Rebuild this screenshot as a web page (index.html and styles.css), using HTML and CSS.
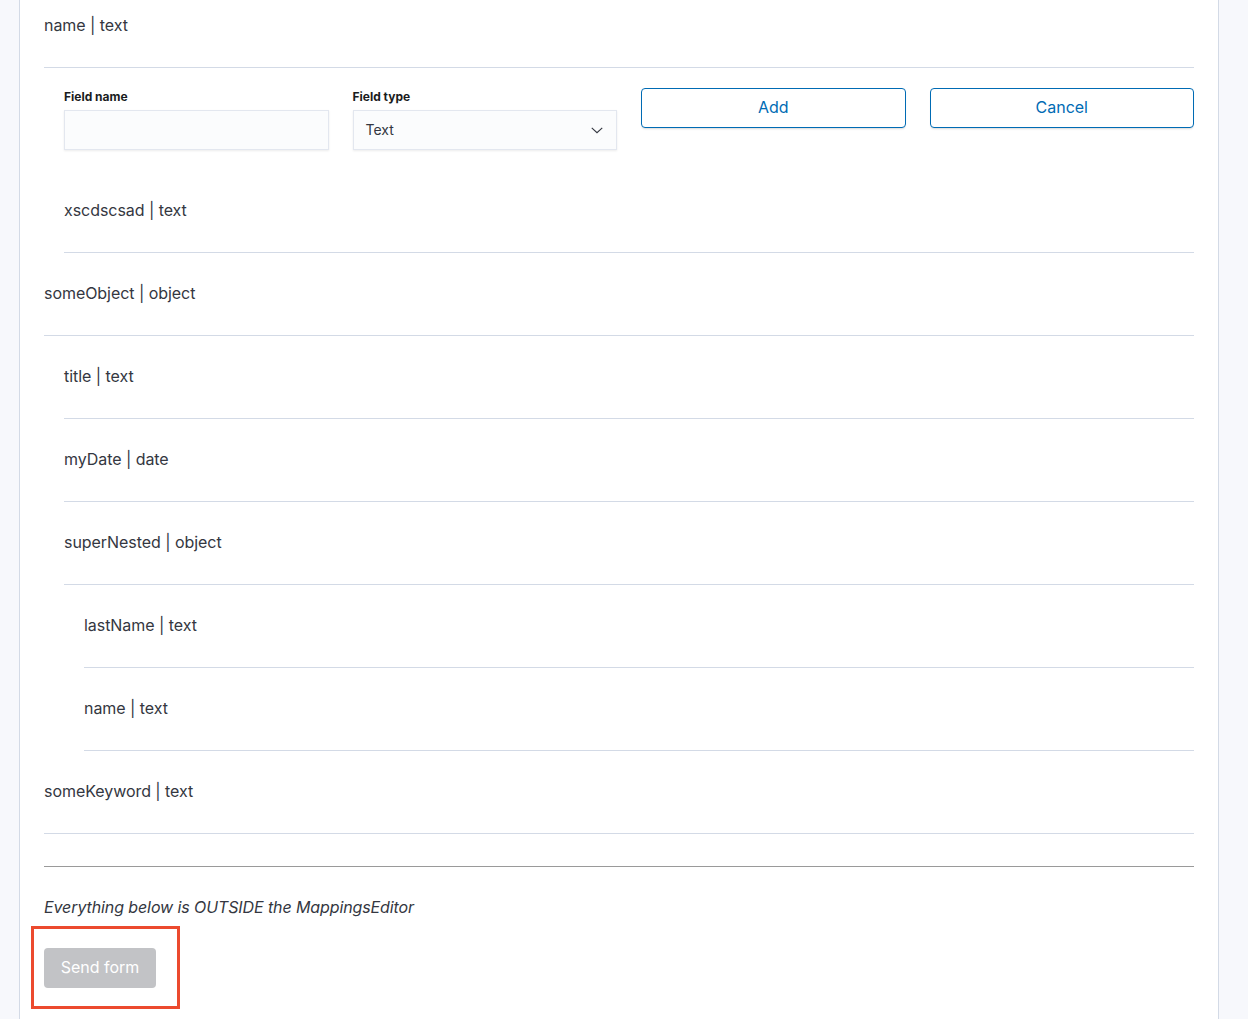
FILE: index.html
```html
<!DOCTYPE html>
<html>
<head>
<meta charset="utf-8">
<link rel="stylesheet" href="styles.css">
</head>
<body>
<div class="panel">
  <div class="row row--first"><span class="label">name | text</span></div>
  <div class="form-row">
    <div class="field">
      <div class="field-label">Field name</div>
      <div class="input"></div>
    </div>
    <div class="field">
      <div class="field-label">Field type</div>
      <div class="input select"><span>Text</span>
        <svg class="chev" width="14" height="14" viewBox="0 0 16 16"><path d="M2 5.5 L8 11 L14 5.5" fill="none" stroke="#343741" stroke-width="1.3"/></svg>
      </div>
    </div>
    <div class="field"><button class="btn">Add</button></div>
    <div class="field"><button class="btn">Cancel</button></div>
  </div>
  <div class="row indent1"><span class="label">xscdscsad | text</span></div>
  <div class="row"><span class="label">someObject | object</span></div>
  <div class="row indent1"><span class="label">title | text</span></div>
  <div class="row indent1"><span class="label">myDate | date</span></div>
  <div class="row indent1"><span class="label">superNested | object</span></div>
  <div class="row indent2"><span class="label">lastName | text</span></div>
  <div class="row indent2"><span class="label">name | text</span></div>
  <div class="row"><span class="label">someKeyword | text</span></div>
  <hr class="sep">
  <p class="note">Everything below is OUTSIDE the MappingsEditor</p>
  <div class="highlight"><button class="send">Send form</button></div>
</div>
</body>
</html>
```
FILE: styles.css
```css
html, body {
  margin: 0;
  padding: 0;
  background: #f7f8fc;
  font-family: Inter, "Noto Sans", sans-serif;
  color: #343741;
}
.panel {
  box-sizing: border-box;
  width: 1200px;
  min-height: 1019px;
  margin-left: 19px;
  background: #fff;
  border-left: 1px solid #d3dae6;
  border-right: 1px solid #d3dae6;
  padding: 0 24px;
}
.row {
  padding: 28px 0 30px;
  border-bottom: 1px solid #d3dae6;
  font-size: 16px;
  line-height: 24px;
  letter-spacing: -0.05px;
}
.row--first {
  padding-top: 13px;
}
.indent1 { margin-left: 20px; }
.indent2 { margin-left: 40px; }
.form-row {
  display: grid;
  grid-template-columns: repeat(4, 1fr);
  gap: 24px;
  margin-left: 20px;
  padding: 20px 0;
  align-items: start;
}
.field-label {
  font-size: 12px;
  font-weight: 700;
  line-height: 18px;
  color: #1a1c21;
  margin-bottom: 4px;
}
.input {
  box-sizing: border-box;
  height: 40px;
  background: #fbfcfd;
  border: 1px solid #e3e7ef;
  box-shadow: 0 1px 2px rgba(0,0,0,0.08);
}
.select {
  display: flex;
  align-items: center;
  justify-content: space-between;
  padding: 0 12px 1px;
  font-size: 14px;
  color: #343741;
}
.chev { display: block; }
.btn {
  display: block;
  width: 100%;
  height: 40px;
  box-sizing: border-box;
  padding: 0 0 2px;
  background: #fff;
  border: 1px solid #006bb4;
  border-radius: 4px;
  color: #006bb4;
  font-family: Inter, "Noto Sans", sans-serif;
  font-size: 16px;
  box-shadow: 0 2px 2px -1px rgba(0,0,0,0.15);
}
.sep {
  margin: 32px 0 0;
  border: 0;
  border-top: 1px solid #9a9a9a;
}
.note {
  margin: 28px 0 0;
  font-style: italic;
  font-size: 16px;
  line-height: 24px;
  letter-spacing: -0.1px;
}
.highlight {
  display: inline-block;
  margin: 7px 0 0 -13px;
  padding: 19px 21px 18px 10px;
  border: 3px solid #ec4a2e;
}
.send {
  display: block;
  width: 112px;
  height: 40px;
  padding: 0 0 2px;
  border: 0;
  border-radius: 4px;
  background: #c2c3c6;
  color: #fff;
  font-family: Inter, "Noto Sans", sans-serif;
  font-size: 16px;
}
```
